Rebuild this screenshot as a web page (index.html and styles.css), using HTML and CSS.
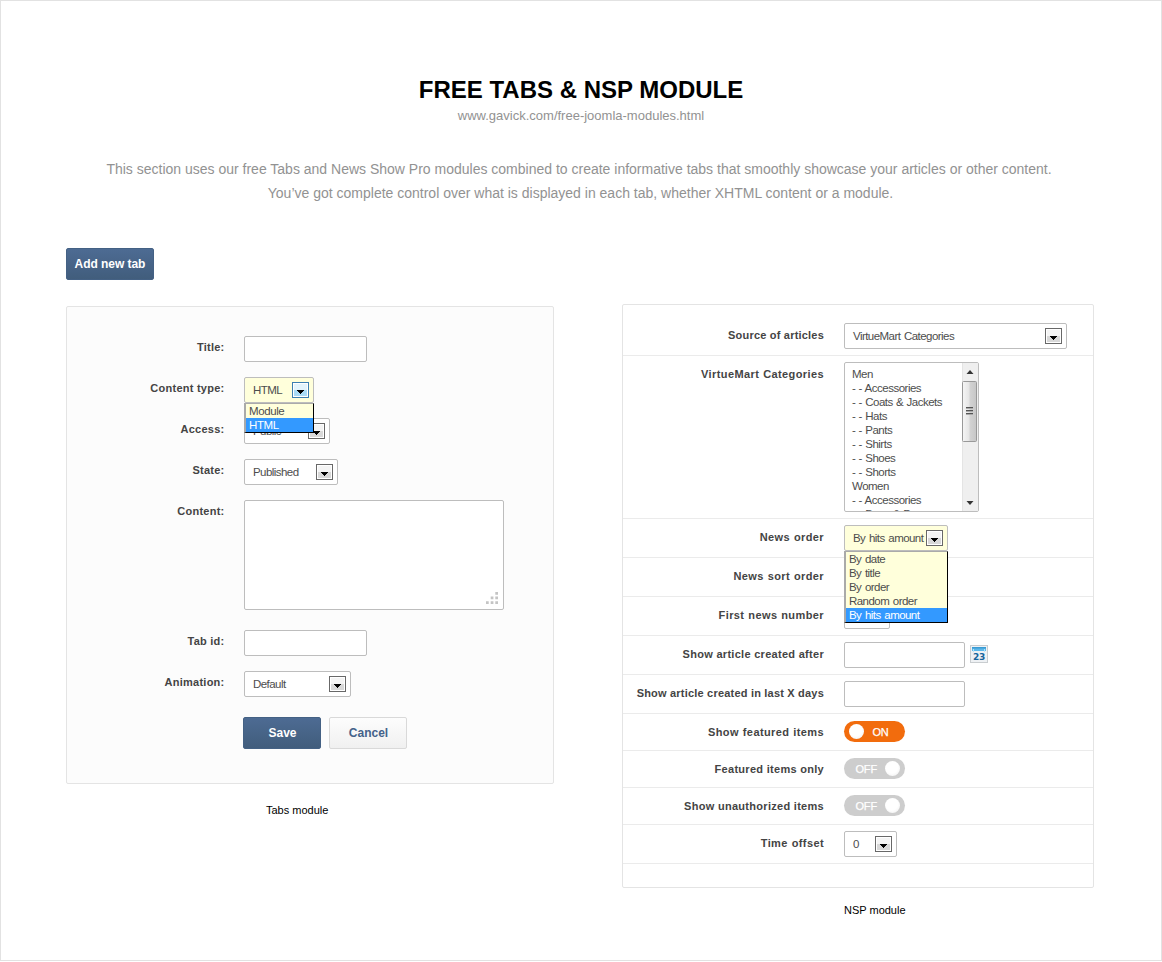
FILE: index.html
```
<!DOCTYPE html>
<html lang="en">
<head>
<meta charset="utf-8">
<title>Free Tabs &amp; NSP Module</title>
<link rel="stylesheet" href="styles.css">
</head>
<body>
<svg class="defs" width="0" height="0">
  <defs>
    <linearGradient id="thumb" x1="0" x2="1"><stop offset="0" stop-color="#f6f6f6"/><stop offset=".45" stop-color="#e6e6e6"/><stop offset=".55" stop-color="#d2d2d2"/><stop offset="1" stop-color="#c6c6c6"/></linearGradient>
    <symbol id="arrow" viewBox="0 0 7 4"><path d="M0 0H7V1H6V2H5V3H4V4H3V3H2V2H1V1H0Z" fill="#000"/></symbol>
  </defs>
</svg>
<main class="page">
  <header class="intro">
    <h1>FREE TABS &amp; NSP MODULE</h1>
    <p class="url">www.gavick.com/free-joomla-modules.html</p>
    <p class="lead">This section uses our free Tabs and News Show Pro modules combined to create informative tabs that smoothly showcase your articles or other content.<br><span class="second">You’ve got complete control over what is displayed in each tab, whether XHTML content or a module.</span></p>
  </header>
  <div class="columns">
    <section class="tabs">
      <button class="btn primary add">Add new tab</button>
      <div class="panel form">
        <div class="field"><label>Title:</label><span class="input"></span></div>
        <div class="field"><label>Content type:</label>
          <div class="select active w70"><span>HTML</span><i class="drop blue"><svg><use href="#arrow"/></svg></i>
            <ul class="menu type"><li>Module</li><li class="on">HTML</li></ul>
          </div></div>
        <div class="field"><label>Access:</label><div class="select w86"><span>Public</span><i class="drop"><svg><use href="#arrow"/></svg></i></div></div>
        <div class="field"><label>State:</label><div class="select w94"><span>Published</span><i class="drop"><svg><use href="#arrow"/></svg></i></div></div>
        <div class="field"><label>Content:</label><div class="textarea"><svg width="12" height="12" fill="#c4c4c4"><path d="M9.300 0h2.700v2.700h-2.700zM9.300 4.600h2.700v2.700h-2.700zM4.700 4.600h2.700v2.700h-2.700zM0 9.300h2.700v2.700h-2.700zM4.700 9.300h2.700v2.700h-2.700zM9.300 9.300h2.700v2.700h-2.700z"/></svg></div></div>
        <div class="field gap"><label>Tab id:</label><span class="input"></span></div>
        <div class="field"><label>Animation:</label><div class="select w107"><span>Default</span><i class="drop"><svg><use href="#arrow"/></svg></i></div></div>
        <div class="actions"><button class="btn primary">Save</button><button class="btn">Cancel</button></div>
      </div>
      <p class="caption">Tabs module</p>
    </section>
    <section class="nsp">
      <div class="panel table">
        <div class="row first"><label>Source of articles</label><div class="select w223"><span>VirtueMart Categories</span><i class="drop"><svg><use href="#arrow"/></svg></i></div></div>
        <div class="row tall"><label class="wide">VirtueMart Categories</label>
          <div class="list">
            <ul><li>Men</li><li>- - Accessories</li><li>- - Coats &amp; Jackets</li><li>- - Hats</li><li>- - Pants</li><li>- - Shirts</li><li>- - Shoes</li><li>- - Shorts</li><li>Women</li><li>- - Accessories</li><li>- - Bags &amp; Purses</li></ul>
            <svg class="scroll" width="16" height="148">
              <rect width="16" height="148" fill="#efefef"/><rect width="1" height="148" fill="#e4e4e4"/>
              <path d="M8 7L11.500 11H4.500Z" fill="#333"/><path d="M4.500 138H11.500L8 142Z" fill="#333"/>
              <rect x=".5" y="18.500" width="14" height="60" rx="1" fill="url(#thumb)" stroke="#999"/>
              <path d="M4 44h7v1H4zM4 47h7v1H4zM4 50h7v1H4z" fill="#555"/><path d="M4 45h7v1H4zM4 48h7v1H4zM4 51h7v1H4z" fill="#aaa"/>
            </svg>
          </div></div>
        <div class="row"><label class="wide">News order</label>
          <div class="select active w104"><span>By hits amount</span><i class="drop"><svg><use href="#arrow"/></svg></i>
            <ul class="menu order"><li>By date</li><li>By title</li><li>By order</li><li>Random order</li><li class="on">By hits amount</li></ul>
          </div></div>
        <div class="row"><label class="wide">News sort order</label></div>
        <div class="row"><label class="wide">First news number</label><span class="input w46"></span></div>
        <div class="row"><label class="mid">Show article created after</label><span class="input w121"></span>
          <svg class="calendar" width="18" height="18"><rect width="18" height="18" fill="#c9cdd0"/><rect x="1" y="1" width="16" height="16" fill="#eef1f4"/><path d="M2 2h14v4H2z" fill="#5cb8ea"/><path d="M2 2h14v1.500H2z" fill="#3a9bd3"/><path d="M3 4h1v3H3zM14 4h1v3h-1z" fill="#b5e2f7"/><text x="9" y="15" text-anchor="middle">23</text></svg></div>
        <div class="row"><label>Show article created in last X days</label><span class="input w121"></span></div>
        <div class="row sw"><label class="wide">Show featured items</label><span class="toggle on">ON</span></div>
        <div class="row sw"><label class="mid">Featured items only</label><span class="toggle">OFF</span></div>
        <div class="row sw"><label class="mid">Show unauthorized items</label><span class="toggle">OFF</span></div>
        <div class="row"><label class="wide">Time offset</label><div class="select w53"><span>0</span><i class="drop"><svg><use href="#arrow"/></svg></i></div></div>
      </div>
      <p class="caption">NSP module</p>
    </section>
  </div>
</main>
</body>
</html>
```
FILE: styles.css
```
* { box-sizing: border-box; }
body { margin: 0; background: #fff; font-family: "Liberation Sans", Arial, sans-serif; color: #444; }
h1, p, ul { margin: 0; padding: 0; }
ul { list-style: none; }
.defs { position: absolute; }
.page { width: 1162px; height: 961px; border: 1px solid #e2e2e2; padding: 73px 67px 0 65px; }

.intro { text-align: center; height: 174px; white-space: nowrap; }
h1 { color: #000; font-size: 24px; line-height: 32px; padding-left: 2px; }
.url { color: #929292; font-size: 13px; line-height: 18px; margin-top: 1px; padding-left: 2px; }
.lead { color: #929292; font-size: 14px; line-height: 24px; margin-top: 32px; padding-right: 2px; }
.second { padding-left: 3px; }

.columns { display: flex; justify-content: space-between; }
.tabs { width: 488px; }
.nsp { width: 472px; padding-top: 56px; }
.panel { border: 1px solid #e4e4e4; border-radius: 2px; }
.form { margin-top: 26px; height: 478px; background: #fcfcfc; padding: 29px 0 0; display: flex; flex-direction: column; gap: 15px; }

.btn { display: block; width: 78px; height: 32px; padding: 0 0 0 1px; border: 1px solid #d9d9d9; border-radius: 2px; background: linear-gradient(#fdfdfd, #f0f0f0); color: #44628a; font: bold 12px/30px "Liberation Sans", Arial, sans-serif; }
.btn.primary { border-color: #446184; background: linear-gradient(#4d6b93, #415d7c); color: #fff; }
.btn.add { width: 88px; padding: 0; letter-spacing: -.05px; }

.field { display: flex; }
.field.gap { margin-top: 5px; }
label { text-align: right; font-weight: bold; font-size: 11px; line-height: 14px; letter-spacing: .2px; white-space: nowrap; }
.field label { width: 158px; margin-right: 19px; padding: 4px .5px 0 0; letter-spacing: .25px; }
.mid { letter-spacing: .29px; }
.wide { letter-spacing: .4px; word-spacing: .4px; }
.input, .select { position: relative; width: 123px; height: 26px; border: 1px solid #bdbdbd; border-radius: 2px; background: #fff; }
.textarea { width: 260px; height: 110px; border: 1px solid #bdbdbd; border-radius: 2px; background: #fff; display: flex; align-items: flex-end; justify-content: flex-end; padding: 5px; }
.select { display: flex; justify-content: space-between; align-items: center; padding: 0 4px 0 8px; font-size: 11.5px; letter-spacing: -.55px; word-spacing: 1px; white-space: nowrap; color: #4d4d4d; }
.active { background: #ffffdb; }
.drop { display: flex; width: 17px; height: 16px; border: 1px solid #686868; box-shadow: inset 0 0 0 1px #fff; background: linear-gradient(#f4f4f4 50%, #d8d8d8 50%); align-items: center; justify-content: center; padding-top: 4px; }
.drop svg { width: 7px; height: 4px; }
.drop.blue { border-color: #3c7fb1; background: linear-gradient(#e3f4fc 50%, #a9dbf5 50%); }
.w70 { width: 70px; }
.w86 { width: 86px; }
.w94 { width: 94px; }
.w107 { width: 107px; }
.w223 { width: 223px; }
.w104 { width: 104px; }
.w46 { width: 46px; }
.w121 { width: 121px; }
.w53 { width: 53px; }
.menu { position: absolute; z-index: 2; left: -1px; top: 25px; background: #ffffdb; border: 1px solid #000; border-width: 1px 1px 1px 2px; border-color: #aaa #000 #000 #aaa; line-height: 14px; width: 70px; }
.menu.order { width: 104px; }
.menu li { padding-left: 3px; height: 14px; }
.menu.type { letter-spacing: -.4px; }
.menu .on { background: #3399ff; color: #fff; }
.actions { display: flex; gap: 8px; margin: 5px 0 0 176px; }
.caption { color: #000; font-size: 11px; line-height: 14px; margin-top: 19px; }
.tabs .caption { padding-left: 200px; }
.nsp .caption { padding-left: 222px; margin-top: 15px; }

.table { height: 584px; }
.row { display: flex; height: 39px; padding-top: 6px; border-bottom: 1px solid #ebebeb; }
.row label { width: 201px; margin-right: 20px; padding-top: 5px; }
.row.first { height: 51px; padding-top: 18px; }
.row.tall { height: 163px; }
.row.sw { height: 37px; padding-top: 7px; }
.row.sw label { padding-top: 4px; }
.list { display: flex; justify-content: space-between; width: 135px; height: 150px; border: 1px solid #bdbdbd; border-radius: 2px; overflow: hidden; font-size: 11.5px; line-height: 14px; letter-spacing: -.5px; word-spacing: .6px; white-space: nowrap; padding: 0 0 0 7px; color: #4d4d4d; }
.list ul { padding-top: 4px; }
.scroll { flex: none; }
.calendar { margin: 3px 0 0 5px; }
.calendar text { font: bold 9px "DejaVu Sans", sans-serif; fill: #17639c; letter-spacing: -.3px; }
.toggle { position: relative; width: 61px; height: 21px; border-radius: 11px; background: #cdcdcd; color: #fff; font-size: 11px; line-height: 22px; letter-spacing: -.2px; padding-left: 11.5px; -webkit-text-stroke: .25px #fff; }
.toggle::after { content: ""; position: absolute; right: 5px; top: 3px; width: 15px; height: 15px; border-radius: 50%; background: radial-gradient(circle at 45% 40%, #fff 50%, #ebebeb); }
.toggle.on { background: #f26c0d; padding-left: 28.5px; }
.toggle.on::after { right: auto; left: 5px; }
```
